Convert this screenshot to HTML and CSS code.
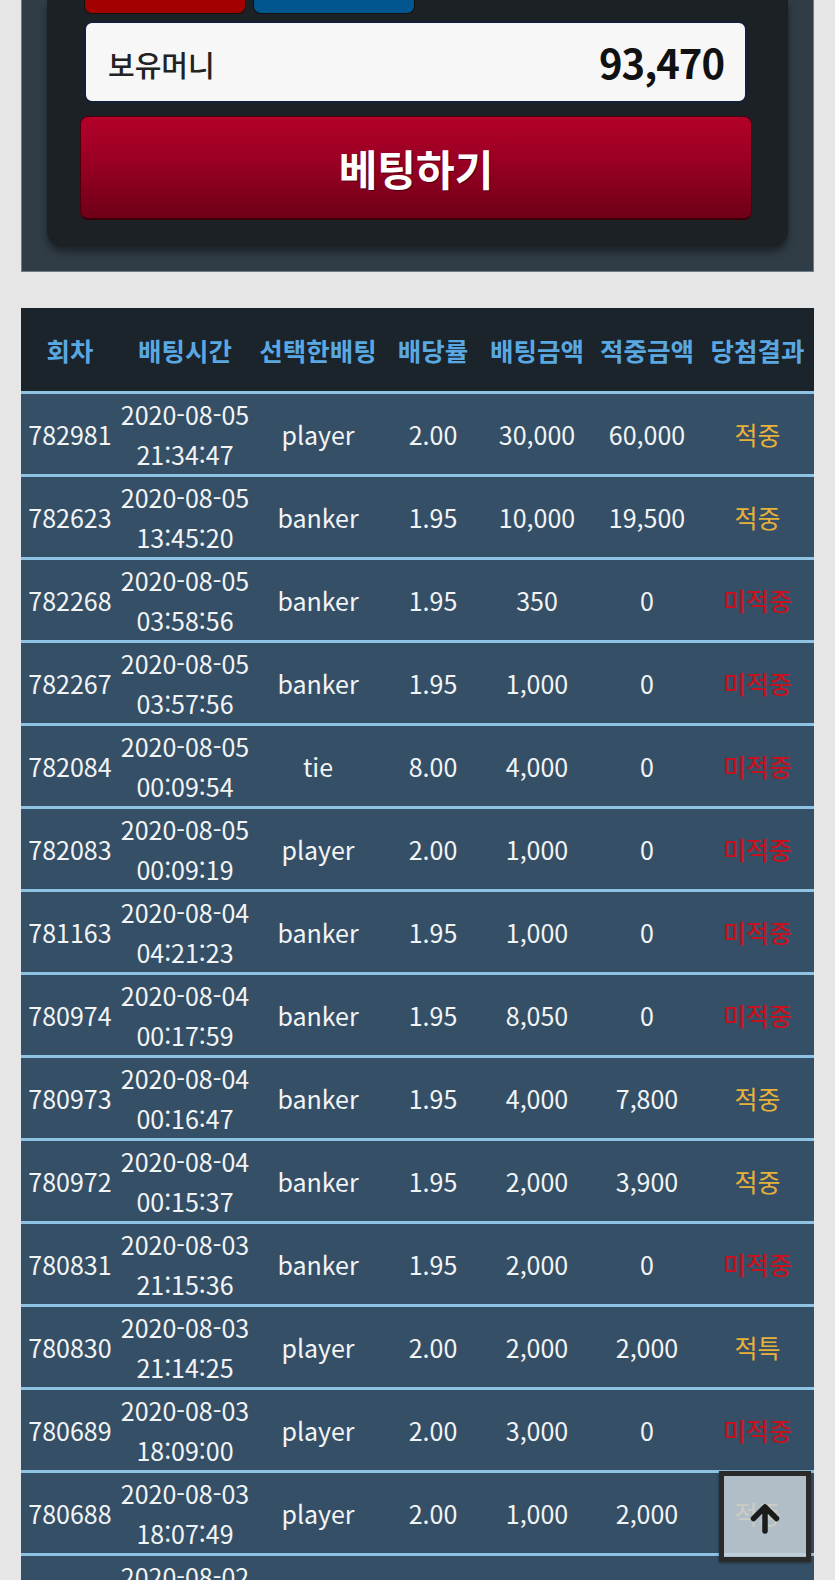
FILE: index.html
```html
<!DOCTYPE html>
<html lang="ko">
<head>
<meta charset="utf-8">
<title>배팅내역</title>
<link rel="stylesheet" href="styles.css">
</head>
<body>
<div class="panel">
  <div class="inner">
    <div class="pick-row">
      <div class="pick pick-red"></div>
      <div class="pick pick-blue"></div>
    </div>
    <div class="balance">
      <span class="balance-label">보유머니</span>
      <span class="balance-value">93,470</span>
    </div>
    <button class="bet-btn">베팅하기</button>
  </div>
</div>

<table class="history">
  <colgroup>
    <col class="c1"><col class="c2"><col class="c3"><col class="c4"><col class="c5"><col class="c6"><col class="c7">
  </colgroup>
  <thead>
    <tr><th>회차</th><th>배팅시간</th><th>선택한배팅</th><th>배당률</th><th>배팅금액</th><th>적중금액</th><th>당첨결과</th></tr>
  </thead>
  <tbody>
    <tr><td>782981</td><td>2020-08-05<br>21:34:47</td><td>player</td><td>2.00</td><td>30,000</td><td>60,000</td><td class="win">적중</td></tr>
    <tr><td>782623</td><td>2020-08-05<br>13:45:20</td><td>banker</td><td>1.95</td><td>10,000</td><td>19,500</td><td class="win">적중</td></tr>
    <tr><td>782268</td><td>2020-08-05<br>03:58:56</td><td>banker</td><td>1.95</td><td>350</td><td>0</td><td class="lose">미적중</td></tr>
    <tr><td>782267</td><td>2020-08-05<br>03:57:56</td><td>banker</td><td>1.95</td><td>1,000</td><td>0</td><td class="lose">미적중</td></tr>
    <tr><td>782084</td><td>2020-08-05<br>00:09:54</td><td>tie</td><td>8.00</td><td>4,000</td><td>0</td><td class="lose">미적중</td></tr>
    <tr><td>782083</td><td>2020-08-05<br>00:09:19</td><td>player</td><td>2.00</td><td>1,000</td><td>0</td><td class="lose">미적중</td></tr>
    <tr><td>781163</td><td>2020-08-04<br>04:21:23</td><td>banker</td><td>1.95</td><td>1,000</td><td>0</td><td class="lose">미적중</td></tr>
    <tr><td>780974</td><td>2020-08-04<br>00:17:59</td><td>banker</td><td>1.95</td><td>8,050</td><td>0</td><td class="lose">미적중</td></tr>
    <tr><td>780973</td><td>2020-08-04<br>00:16:47</td><td>banker</td><td>1.95</td><td>4,000</td><td>7,800</td><td class="win">적중</td></tr>
    <tr><td>780972</td><td>2020-08-04<br>00:15:37</td><td>banker</td><td>1.95</td><td>2,000</td><td>3,900</td><td class="win">적중</td></tr>
    <tr><td>780831</td><td>2020-08-03<br>21:15:36</td><td>banker</td><td>1.95</td><td>2,000</td><td>0</td><td class="lose">미적중</td></tr>
    <tr><td>780830</td><td>2020-08-03<br>21:14:25</td><td>player</td><td>2.00</td><td>2,000</td><td>2,000</td><td class="win">적특</td></tr>
    <tr><td>780689</td><td>2020-08-03<br>18:09:00</td><td>player</td><td>2.00</td><td>3,000</td><td>0</td><td class="lose">미적중</td></tr>
    <tr><td>780688</td><td>2020-08-03<br>18:07:49</td><td>player</td><td>2.00</td><td>1,000</td><td>2,000</td><td class="win">적중</td></tr>
    <tr><td>780552</td><td>2020-08-02<br>23:41:08</td><td>banker</td><td>1.95</td><td>1,000</td><td>0</td><td class="lose">미적중</td></tr>
  </tbody>
</table>

<a class="to-top" href="#" aria-label="맨 위로">
  <svg width="34" height="34" viewBox="0 0 34 34" aria-hidden="true">
    <path d="M17 31 V8 M5.5 18.5 L17 7 L28.5 18.5" fill="none" stroke="#1b1b1b" stroke-width="5.5" stroke-linecap="round" stroke-linejoin="round"/>
  </svg>
</a>
</body>
</html>
```

FILE: styles.css
```css
html, body {
  margin: 0;
  padding: 0;
}
body {
  background: #e6e6e6;
  font-family: "Noto Sans CJK KR", "Noto Sans", sans-serif;
  height: 1580px;
  overflow: hidden;
}

.panel {
  margin-left: 21px;
  width: 793px;
  box-sizing: border-box;
  background: #313d46;
  border: 1px solid #6d7c88;
  border-top: none;
  padding: 0 25px 24px 25px;
}

.inner {
  background: #1c2125;
  border-radius: 0 0 16px 16px;
  box-shadow: 0 5px 9px rgba(0, 0, 0, 0.45);
  padding: 0 41px 27px 37px;
}

.pick-row {
  display: flex;
  gap: 7px;
  height: 14px;
}
.pick {
  width: 162px;
  height: 14px;
  box-sizing: border-box;
  border: 1px solid #111;
  border-top: none;
  border-radius: 0 0 8px 8px;
}
.pick-red { background: #a30000; }
.pick-blue { background: #02568f; }

.balance {
  margin-top: 7px;
  height: 82px;
  box-sizing: border-box;
  background: #f7f7f7;
  border: 2px solid #14203a;
  border-radius: 8px;
  display: flex;
  align-items: center;
  justify-content: space-between;
  padding: 0 21px 0 22px;
}
.balance-label {
  font-size: 29px;
  font-weight: 500;
  color: #222;
  padding-top: 4px;
}
.balance-value {
  font-size: 40px;
  font-weight: 700;
  color: #111;
  letter-spacing: -1px;
}

.bet-btn {
  display: block;
  margin: 13px 0 0 -4px;
  width: calc(100% + 9px);
  height: 104px;
  box-sizing: border-box;
  border: 1px solid #4c000f;
  border-bottom: 2px solid #3a000a;
  border-radius: 8px;
  background: linear-gradient(to bottom, #b30029 0%, #950022 50%, #6f0017 100%);
  color: #fff;
  font-family: "Noto Sans CJK KR", sans-serif;
  font-size: 42px;
  font-weight: 700;
  text-shadow: 1px 1px 0 rgba(0, 0, 0, 0.45);
  padding: 0;
  cursor: pointer;
}

.history {
  margin: 36px 0 0 21px;
  width: 793px;
  border-collapse: collapse;
  table-layout: fixed;
}
.c1 { width: 98px; }
.c2 { width: 132px; }
.c3 { width: 134px; }
.c4 { width: 96px; }
.c5 { width: 112px; }
.c6 { width: 108px; }
.c7 { width: 113px; }

.history th {
  height: 83px;
  background: #1b232b;
  color: #5aa8e2;
  font-size: 25.5px;
  font-weight: 700;
  padding: 0;
  text-align: center;
  white-space: nowrap;
}
.history td {
  height: 80px;
  padding: 0;
  background: #355066;
  border-top: 3px solid #8fc3e3;
  color: #f2f4f6;
  font-size: 25px;
  line-height: 40px;
  text-align: center;
  white-space: nowrap;
}
.history td.win { color: #e8b13a; }
.history td.lose { color: #c4121f; font-weight: 500; }

.to-top {
  position: fixed;
  left: 719px;
  top: 1471px;
  width: 92px;
  height: 91px;
  box-sizing: border-box;
  border: 5px solid #2a2a2a;
  background: rgba(198, 208, 216, 0.86);
  display: flex;
  align-items: center;
  justify-content: center;
  box-shadow: 0 1px 3px rgba(0, 0, 0, 0.4);
}
```
